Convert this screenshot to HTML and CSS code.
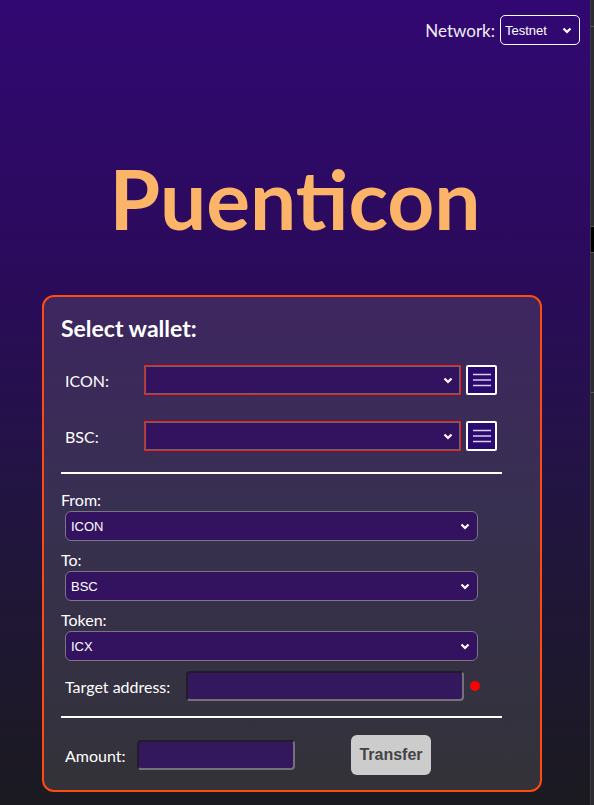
FILE: index.html
```html
<!DOCTYPE html>
<html>
<head>
<meta charset="utf-8">
<link rel="stylesheet" href="styles.css">
</head>
<body>
<div class="screen">
  <main class="page">
    <header class="topbar">
      <label class="net-label" for="net">Network:</label>
      <div class="net-wrap">
        <select id="net" class="net-select"><option>Testnet</option></select>
        <svg class="chev" width="10" height="7" viewBox="0 0 10 7"><path d="M1.5 1.5 L5 5 L8.5 1.5" fill="none" stroke="#fff" stroke-width="2.2"/></svg>
      </div>
    </header>
    <h1 class="title">Puenticon</h1>
    <section class="card">
      <h2 class="card-title">Select wallet:</h2>
      <div class="wallet-row">
        <span class="wlabel">ICON:</span>
        <div class="sel-wrap wallet-sel">
          <select class="sel red"><option></option></select>
          <svg class="chev" width="10" height="7" viewBox="0 0 10 7"><path d="M1.5 1.5 L5 5 L8.5 1.5" fill="none" stroke="#fff" stroke-width="2.2"/></svg>
        </div>
        <button class="menu-btn" aria-label="menu"><svg width="20" height="14" viewBox="0 0 20 14"><path d="M1 1.5H19M1 7H19M1 12.5H19" stroke="#d8d0ec" stroke-width="1.6"/></svg></button>
      </div>
      <div class="wallet-row">
        <span class="wlabel">BSC:</span>
        <div class="sel-wrap wallet-sel">
          <select class="sel red"><option></option></select>
          <svg class="chev" width="10" height="7" viewBox="0 0 10 7"><path d="M1.5 1.5 L5 5 L8.5 1.5" fill="none" stroke="#fff" stroke-width="2.2"/></svg>
        </div>
        <button class="menu-btn" aria-label="menu"><svg width="20" height="14" viewBox="0 0 20 14"><path d="M1 1.5H19M1 7H19M1 12.5H19" stroke="#d8d0ec" stroke-width="1.6"/></svg></button>
      </div>
      <hr class="rule rule-top">
      <div class="field">
        <span class="flabel">From:</span>
        <div class="sel-wrap form-sel">
          <select class="sel gray"><option>ICON</option></select>
          <svg class="chev" width="10" height="7" viewBox="0 0 10 7"><path d="M1.5 1.5 L5 5 L8.5 1.5" fill="none" stroke="#fff" stroke-width="2.2"/></svg>
        </div>
      </div>
      <div class="field">
        <span class="flabel">To:</span>
        <div class="sel-wrap form-sel">
          <select class="sel gray"><option>BSC</option></select>
          <svg class="chev" width="10" height="7" viewBox="0 0 10 7"><path d="M1.5 1.5 L5 5 L8.5 1.5" fill="none" stroke="#fff" stroke-width="2.2"/></svg>
        </div>
      </div>
      <div class="field">
        <span class="flabel">Token:</span>
        <div class="sel-wrap form-sel">
          <select class="sel gray"><option>ICX</option></select>
          <svg class="chev" width="10" height="7" viewBox="0 0 10 7"><path d="M1.5 1.5 L5 5 L8.5 1.5" fill="none" stroke="#fff" stroke-width="2.2"/></svg>
        </div>
      </div>
      <div class="target-row">
        <span class="tlabel target-label">Target address:</span>
        <input class="inp target" type="text">
        <span class="dot"></span>
      </div>
      <hr class="rule rule-bottom">
      <div class="amount-row">
        <span class="tlabel amount-label">Amount:</span>
        <input class="inp amount" type="text">
        <button class="transfer">Transfer</button>
      </div>
    </section>
  </main>
  <aside class="edge">
    <span class="seg s1"></span>
    <span class="seg s2"></span>
    <span class="seg s3"></span>
    <span class="seg s4"></span>
  </aside>
</div>
</body>
</html>
```
FILE: styles.css
```css
* { box-sizing: border-box; }
html, body { margin: 0; padding: 0; }
body {
  width: 594px;
  height: 805px;
  overflow: hidden;
  font-family: "Lato", "Open Sans", sans-serif;
  color: #fff;
}
.screen {
  display: flex;
  width: 594px;
  height: 805px;
}
.page {
  flex: 1;
  display: flex;
  flex-direction: column;
  background: linear-gradient(180deg, #310872 0%, #2a0b5a 35%, #221443 60%, #1b1a20 100%);
}
.edge {
  width: 4px;
  background: #2b2b30;
  border-left: 1px solid #3a3a40;
  display: flex;
  flex-direction: column;
}
.seg { display: block; border-bottom: 1px solid #55555c; }
.s1 { height: 27px; }
.s2 { height: 200px; }
.s3 { height: 26px; background: #000; }
.s4 { height: 140px; }

.topbar {
  display: flex;
  justify-content: flex-end;
  align-items: center;
  gap: 5px;
  padding: 15px 10px 0 0;
}
.net-label { font-size: 17px; color: #f0eef5; }
.net-wrap { position: relative; }
.net-select {
  appearance: none;
  -webkit-appearance: none;
  width: 80px;
  height: 30px;
  border: 1px solid #fff;
  border-radius: 5px;
  background: #310872;
  color: #fff;
  font-family: "Liberation Sans", Arial, sans-serif;
  font-size: 13px;
  padding: 0 0 0 4px;
}
.chev {
  position: absolute;
  right: 8px;
  top: 50%;
  margin-top: -3px;
  pointer-events: none;
}
.title {
  margin: 103px 0 0 0;
  text-align: center;
  font-size: 82px;
  line-height: 100px;
  font-weight: 700;
  color: #fcb468;
  letter-spacing: 0;
}
.card {
  margin: 47px 0 0 42px;
  width: 500px;
  height: 497px;
  border: 2px solid #ff4a10;
  border-radius: 12px;
  background: linear-gradient(180deg, #3e2660 0%, #373050 45%, #333238 100%);
  padding: 17px 40px 0 17px;
  display: flex;
  flex-direction: column;
}
.card-title {
  margin: 0;
  font-size: 23px;
  line-height: 28px;
  font-weight: 700;
}
.wallet-row {
  display: flex;
  align-items: center;
  margin-top: 23px;
  padding-left: 4px;
}
.wallet-row + .wallet-row { margin-top: 26px; }
.wlabel { width: 79px; font-size: 16px; }
.sel-wrap { position: relative; }
.wallet-sel { width: 317px; }
.sel {
  appearance: none;
  -webkit-appearance: none;
  width: 100%;
  color: #fff;
  font-family: "Liberation Sans", Arial, sans-serif;
  font-size: 13px;
  background: #33135f;
}
.sel.red {
  height: 30px;
  border: 1px solid #ff1a1a;
  border-radius: 0;
  outline: 1px solid #666;
  outline-offset: -2px;
}
.menu-btn {
  margin-left: 5px;
  width: 31px;
  height: 30px;
  border: 2px solid #fff;
  border-radius: 2px;
  background: #2a0a6e;
  padding: 0;
  display: flex;
  align-items: center;
  justify-content: center;
}
.rule {
  border: 0;
  height: 2px;
  background: #fff;
  width: 441px;
  margin: 0;
}
.rule-top { margin-top: 21px; }
.field { display: flex; flex-direction: column; }
.rule-top + .field { margin-top: 16px; }
.field + .field { margin-top: 9px; }
.flabel { font-size: 16px; line-height: 20px; }
.form-sel { margin: 1px 0 0 4px; width: 413px; }
.sel.gray {
  height: 30px;
  border: 1px solid #7a7487;
  border-radius: 6px;
  padding: 0 0 0 5px;
}
.target-row {
  display: flex;
  align-items: center;
  margin-top: 10px;
  padding-left: 4px;
}
.tlabel { font-size: 16px; }
.target-label { width: 121px; }
.amount-label { width: 72px; }
.inp {
  height: 30px;
  background: #33185e;
  border: 2px solid #767079;
  border-top-color: #221c2a;
  border-left-color: #221c2a;
  border-radius: 4px;
  color: #fff;
}
.target { width: 278px; }
.dot {
  width: 10px;
  height: 10px;
  border-radius: 50%;
  background: #ff0000;
  margin-left: 6px;
}
.rule-bottom { margin-top: 15px; }
.amount-row {
  display: flex;
  align-items: center;
  margin-top: 17px;
  padding-left: 4px;
}
.amount { width: 158px; }
.transfer {
  margin-left: 56px;
  width: 80px;
  height: 40px;
  border: 0;
  border-radius: 6px;
  background: #cccccc;
  color: #444;
  font-family: "Liberation Sans", Arial, sans-serif;
  font-weight: 700;
  font-size: 16px;
}
```
